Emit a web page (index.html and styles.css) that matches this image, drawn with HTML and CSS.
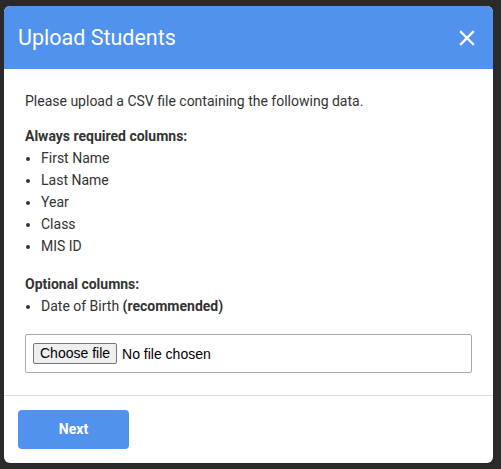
FILE: index.html
```html
<!DOCTYPE html>
<html>
<head>
<meta charset="utf-8">
<link rel="stylesheet" href="styles.css">
</head>
<body>
<div class="modal">
  <div class="modal-header">
    <h1 class="modal-title">Upload Students</h1>
    <button class="close" aria-label="Close">
      <svg width="16" height="16" viewBox="0 0 16 16"><path d="M2 2 L14 14 M14 2 L2 14" stroke="#fff" stroke-width="2.4" stroke-linecap="square"/></svg>
    </button>
  </div>
  <div class="modal-body">
    <p class="intro">Please upload a CSV file containing the following data.</p>
    <p class="heading">Always required columns:</p>
    <ul class="cols">
      <li>First Name</li>
      <li>Last Name</li>
      <li>Year</li>
      <li>Class</li>
      <li>MIS ID</li>
    </ul>
    <p class="heading optional">Optional columns:</p>
    <ul class="cols">
      <li>Date of Birth <b>(recommended)</b></li>
    </ul>
    <div class="file-box">
      <span class="file-btn">Choose file</span>
      <span class="file-name">No file chosen</span>
    </div>
  </div>
  <div class="modal-footer">
    <button class="next">Next</button>
  </div>
</div>
</body>
</html>
```

FILE: styles.css
```css
html, body {
  margin: 0;
  padding: 0;
}
body {
  background: #2a2a2a;
  width: 501px;
  height: 469px;
  padding: 6px 0 0 4px;
  box-sizing: border-box;
  font-family: Roboto, "Liberation Sans", sans-serif;
  color: #333;
}
.modal {
  width: 489px;
  height: 457px;
  background: #fff;
  border-radius: 6px;
  overflow: hidden;
  display: flex;
  flex-direction: column;
}
.modal-header {
  background: #5192ee;
  height: 63px;
  display: flex;
  align-items: center;
  justify-content: space-between;
  padding: 0 18px 0 14px;
  box-sizing: border-box;
}
.modal-title {
  margin: 0;
  font-size: 21.5px;
  font-weight: 400;
  color: #fff;
}
.close {
  background: none;
  border: 0;
  padding: 0;
  width: 16px;
  height: 16px;
  display: flex;
}
.modal-body {
  padding: 21px 21px 21px 21px;
  font-size: 14px;
  line-height: 22px;
  flex: 1;
}
.modal-body p {
  margin: 0;
}
.heading {
  font-weight: 700;
  margin-top: 13px !important;
}
.heading.optional {
  margin-top: 16px !important;
}
.cols {
  margin: 0;
  padding: 0 0 0 16px;
}
.file-box {
  margin-top: 17px;
  height: 39px;
  border: 1px solid #aaa;
  border-radius: 2px;
  box-sizing: border-box;
  display: flex;
  align-items: center;
  padding-left: 7px;
  font-family: "Liberation Sans", Arial, sans-serif;
  font-size: 14px;
  color: #000;
}
.file-btn {
  background: #efefef;
  border: 1px solid #767676;
  border-radius: 2px;
  height: 21px;
  line-height: 19px;
  box-sizing: border-box;
  padding: 0 6px;
  font-size: 14px;
  color: #000;
}
.file-name {
  margin-left: 5px;
}
.modal-footer {
  border-top: 1px solid #ddd;
  padding: 14px 14px 14px 14px;
}
.next {
  width: 111px;
  height: 39px;
  background: #5192ee;
  border: 0;
  border-radius: 4px;
  color: #fff;
  font-family: Roboto, "Liberation Sans", sans-serif;
  font-size: 14px;
  font-weight: 700;
  display: block;
  padding-bottom: 2px;
}
```
